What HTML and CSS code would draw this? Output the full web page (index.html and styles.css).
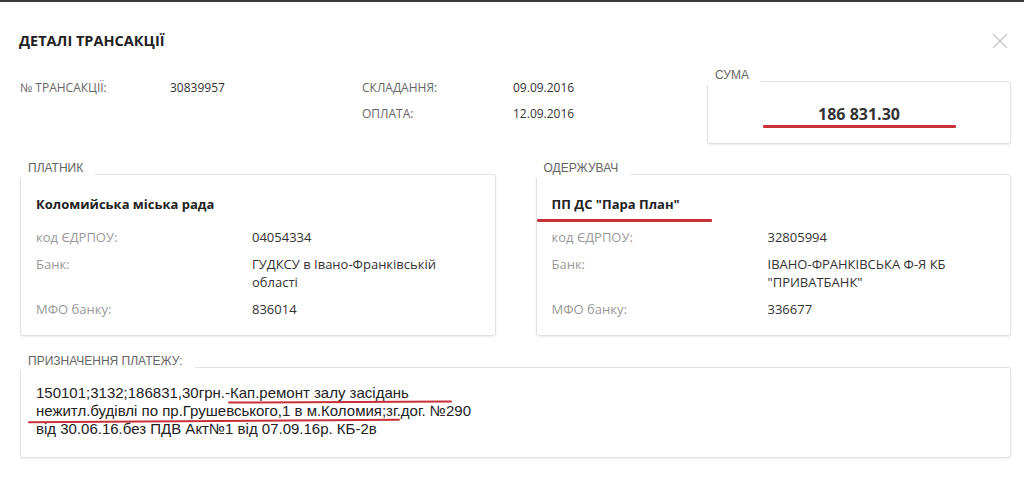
FILE: index.html
```html
<!DOCTYPE html>
<html><head><title>Деталі трансакції</title><meta charset="utf-8"><link rel="stylesheet" href="styles.css"></head>
<body>
<div class="topbar"></div>
<div class="modal">
	<div class="head">
		<h2>ДЕТАЛІ ТРАНСАКЦІЇ</h2>
		<svg class="close" width="16" height="16" viewBox="0 0 16 16"><path d="M1 1L15 15M15 1L1 15" stroke="#c9c9c9" stroke-width="1.4" fill="none"/></svg>
	</div>

	<div class="summary">
		<div class="info">
			<span class="lbl">№ ТРАНСАКЦІЇ:</span><span class="val">30839957</span>
			<span class="lbl">СКЛАДАННЯ:</span><span class="val">09.09.2016</span>
			<span></span><span></span>
			<span class="lbl">ОПЛАТА:</span><span class="val">12.09.2016</span>
		</div>
		<div class="group sum">
			<div class="legend">СУМА</div>
			<div class="box">
				<div class="amount">186 831.30</div>
				<div class="mark m-sum"></div>
			</div>
		</div>
	</div>

	<div class="parties">
		<div class="group">
			<div class="legend">ПЛАТНИК</div>
			<div class="box">
				<div class="name">Коломийська міська рада</div>
				<div class="rows">
					<span class="k">код ЄДРПОУ:</span><span class="v">04054334</span>
					<span class="k">Банк:</span><span class="v">ГУДКСУ в Івано-Франківській області</span>
					<span class="k">МФО банку:</span><span class="v">836014</span>
				</div>
			</div>
		</div>
		<div class="group">
			<div class="legend">ОДЕРЖУВАЧ</div>
			<div class="box">
				<div class="name">ПП ДС "Пара План"</div>
				<div class="mark m-name"></div>
				<div class="rows">
					<span class="k">код ЄДРПОУ:</span><span class="v">32805994</span>
					<span class="k">Банк:</span><span class="v">ІВАНО-ФРАНКІВСЬКА Ф-Я КБ "ПРИВАТБАНК"</span>
					<span class="k">МФО банку:</span><span class="v">336677</span>
				</div>
			</div>
		</div>
	</div>

	<div class="group purpose">
		<div class="legend">ПРИЗНАЧЕННЯ ПЛАТЕЖУ:</div>
		<div class="box">
			<p>150101;3132;186831,30грн.-Кап.ремонт залу засідань<br>нежитл.будівлі по пр.Грушевського,1 в м.Коломия;зг.дог. №290<br>від 30.06.16.без ПДВ Акт№1 від 07.09.16р. КБ-2в</p>
			<div class="mark m-p1"></div>
			<div class="mark m-p2"></div>
		</div>
	</div>
</div>
</body></html>
```

FILE: styles.css
```css
body { margin: 0; background: #fff; font-family: "Open Sans", "Liberation Sans", sans-serif; color: #333; }
.topbar { height: 2px; background: #3b3b3b; }
.modal { padding: 29px 13px 20px 20px; }

.head { display: flex; justify-content: space-between; align-items: center; }
.head h2 { margin: 0 0 0 -1px; font-size: 14.5px; line-height: 20px; font-weight: 700; color: #222; }
.close { margin-right: 3px; }

.summary { display: flex; margin-top: 18px; }
.info { flex: 1; display: grid; grid-template-columns: 150px 192px 151px 1fr; row-gap: 8px;
	align-content: start; margin-top: 10px; font-size: 12px; line-height: 18px; }
.info .lbl { color: #666; }
.info .val { color: #333; }

.group { display: flex; flex-direction: column; align-items: flex-start; }
.legend { position: relative; z-index: 1; background: #fff; padding: 0 12px 4px 8px; margin-bottom: -4px;
	font-family: "Liberation Sans", Arial, sans-serif; font-size: 12px; line-height: 12px; color: #666; }
.box { position: relative; align-self: stretch; border: 1px solid #e2e2e2; border-radius: 3px;
	box-shadow: 0 1px 2px rgba(0,0,0,.07); background: #fff; }

.sum { width: 304px; }
.sum .box { padding: 21px 0 18px; }
.amount { text-align: center; font-size: 16px; line-height: 22px; font-weight: 700; color: #333; }

.parties { display: grid; grid-template-columns: 1fr 1fr; column-gap: 40px; margin-top: 18px; }
.parties .box { padding: 20px 15px 17px; height: 162px; box-sizing: border-box; }
.name { font-size: 13px; line-height: 18px; font-weight: 700; color: #222; }
.rows { display: grid; grid-template-columns: 216px 1fr; row-gap: 9px; margin-top: 15px;
	font-size: 13px; line-height: 18px; }
.rows .k { color: #999; }
.rows .v { color: #333; padding-right: 20px; }

.purpose { margin-top: 19px; }
.purpose .box { padding: 16px 15px 19px; }
.purpose p { margin: 0; font-family: "Liberation Sans", Arial, sans-serif; font-size: 15px; line-height: 18px; color: #222; }

.mark { position: absolute; height: 3px; background: #c8303a; border-radius: 1px; }
.m-sum { left: 55px; top: 43px; width: 193px; }
.m-name { left: 0; top: 44px; width: 175px; }
.m-p1 { left: 207px; top: 33px; width: 224px; height: 2px; transform: rotate(-0.3deg); }
.m-p2 { left: 7px; top: 52px; width: 372px; height: 2px; transform: rotate(-0.4deg); }
```
